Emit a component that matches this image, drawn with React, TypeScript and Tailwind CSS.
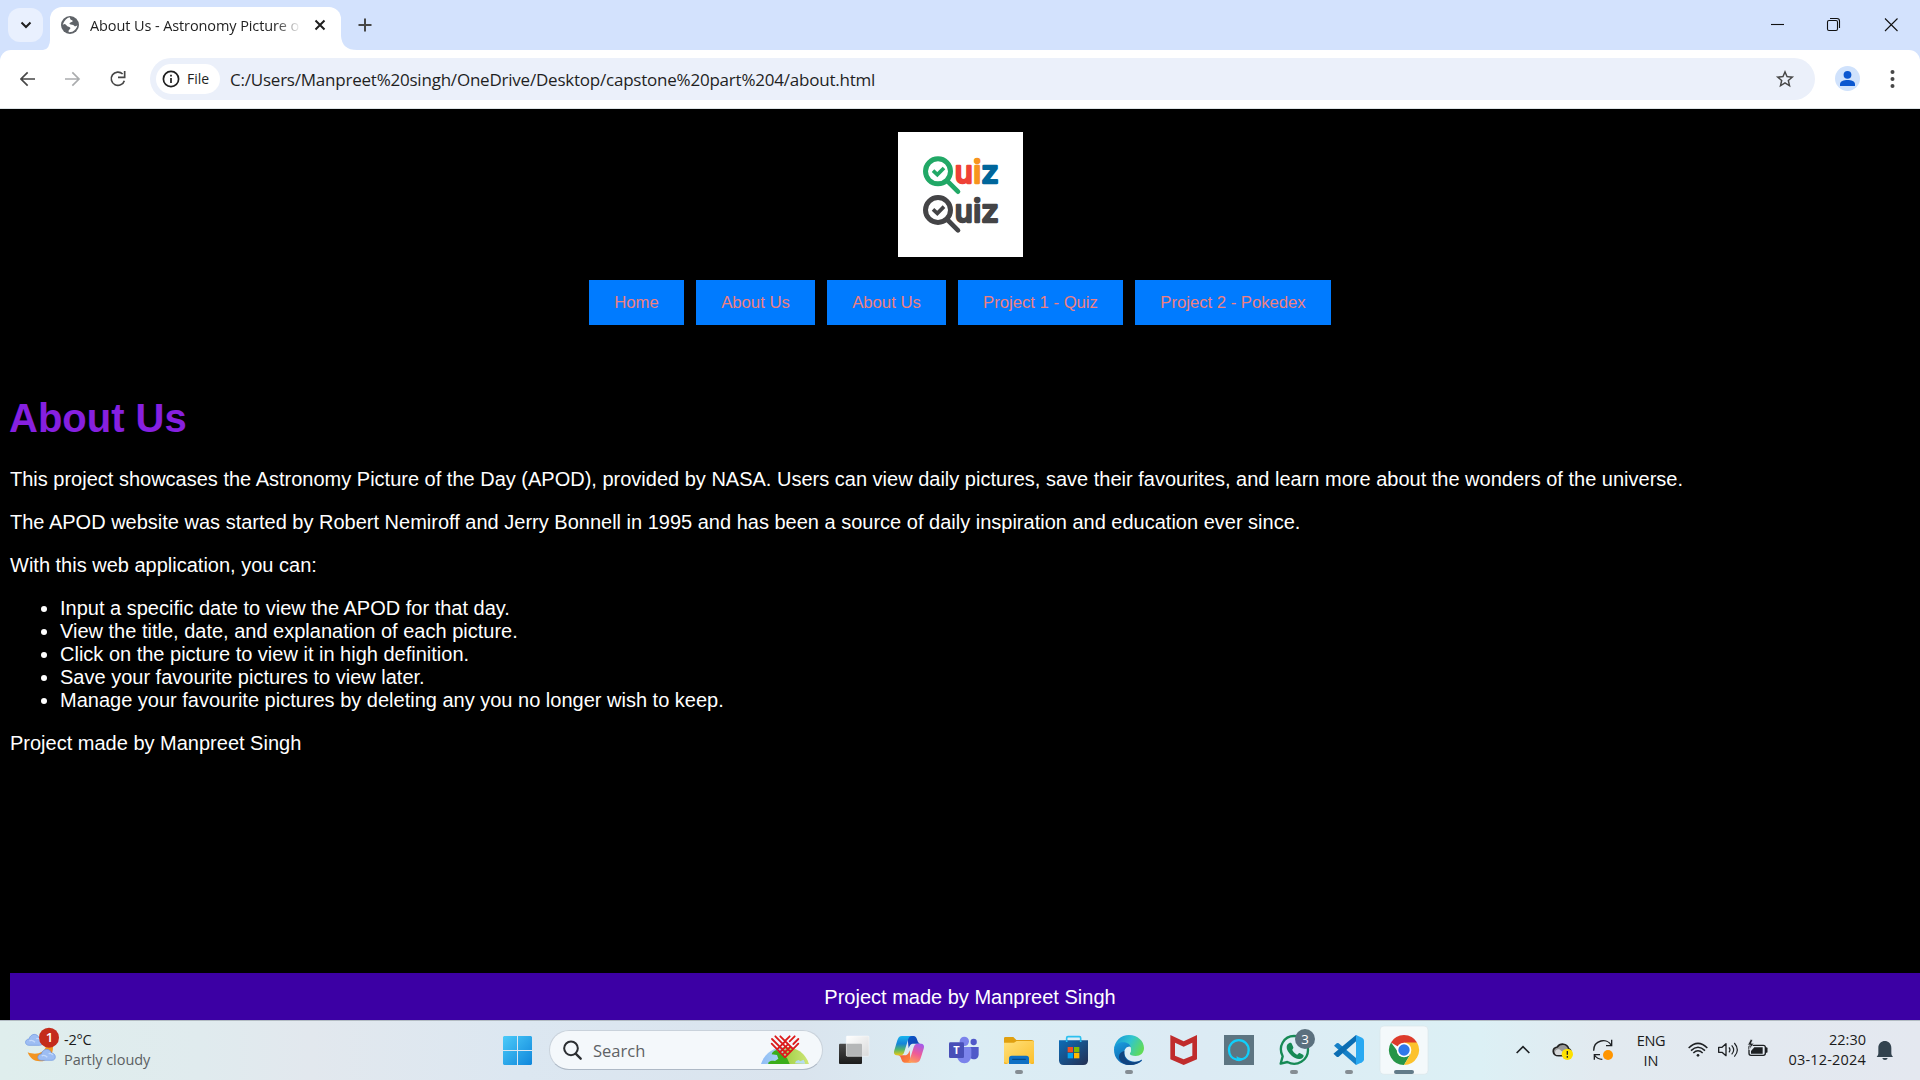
import React from "react";

const SANS = "font-['Liberation_Sans',Arial,sans-serif]";
const UI = "font-['Open_Sans','Noto_Sans',sans-serif]";

function Globe() {
  return (
    <svg className="h-[18px] w-[18px]" viewBox="183 48 54 54">
      <circle cx="210" cy="75" r="27" fill="#5f6368" />
      <path d="M188 74c5-13 13-21 21-22l2 5c1 4 6 2 7 6 0 4-6 3-9 6-2 3 2 5 7 5 6 0 7 6 11 5 3 0 4-4 5-4-1 9-7 17-15 20l-10 2c-3-2-1-7 2-9 4-3 2-7-3-8-7-1-7-7-12-8z" fill="#fff" />
    </svg>
  );
}

function QuizMark({ y, ring, u, i, z }: { y: number; ring: string; u: string; i: string; z: string }) {
  return (
    <g transform={`translate(0 ${y})`}>
      <circle cx="174" cy="154" r="37.5" fill="#fff" stroke={ring} strokeWidth="15" />
      <path d="M203 184l31 31" stroke={ring} strokeWidth="14" strokeLinecap="round" />
      <path d="M159 152l13 12 20-20" fill="none" stroke={ring} strokeWidth="11" />
      <g fontSize="94" className="font-['Inter',sans-serif] font-medium" strokeWidth="7" strokeLinejoin="round">
        <text x="224" y="190" fill={u} stroke={u} textLength="54" lengthAdjust="spacingAndGlyphs">u</text>
        <text x="279.500" y="190" fill={i} stroke={i}>i</text>
        <text x="304" y="190" fill={z} stroke={z}>z</text>
      </g>
    </g>
  );
}

function QuizLogo() {
  return (
    <svg className="h-[125px] w-[125px] bg-white" viewBox="54 36 375 375">
      <QuizMark y={0} ring="#21a866" u="#ef4136" i="#f7941e" z="#00669b" />
      <QuizMark y={116} ring="#444446" u="#444446" i="#444446" z="#444446" />
    </svg>
  );
}

function Cell({ x, w = 165, children }: { x: number; w?: number; children: React.ReactNode }) {
  return (
    <svg className="h-[59px] shrink-0" width={w / 3} viewBox={`${x} 18 ${w} 177`} fill="none">
      {children}
    </svg>
  );
}

const Dot = ({ cx }: { cx: number }) => <rect x={cx - 12} y="165" width="24" height="12" rx="6" fill="#858d93" />;

function TaskbarIcons() {
  return (
    <>
      <Cell x={18}>
        <defs>
          <linearGradient id="tv1" x1="0" y1="0" x2="0" y2="1"><stop stopColor="#4a4a4a" /><stop offset="1" stopColor="#1b1b1b" /></linearGradient>
          <linearGradient id="tv2" x1="0" y1="0" x2="1" y2="1"><stop stopColor="#fff" /><stop offset="1" stopColor="#d9dadb" /></linearGradient>
        </defs>
        <rect x="57" y="86" width="69" height="61" rx="3" fill="url(#tv1)" />
        <rect x="79" y="63" width="68" height="61" rx="3" fill="url(#tv2)" />
        <path d="M79 86h44q3 0 3 3v35H82q-3 0-3-3z" fill="#b5b7b8" />
        <rect x="79" y="63" width="68" height="61" rx="3" stroke="#fff" strokeOpacity=".6" strokeWidth="2" />
      </Cell>
      <Cell x={183}>
        <defs>
          <linearGradient id="cp1" x1="0" y1="0" x2="0" y2="1"><stop stopColor="#18b5ee" /><stop offset=".4" stopColor="#1584d8" /><stop offset=".7" stopColor="#54b56a" /><stop offset="1" stopColor="#ecc813" /></linearGradient>
          <linearGradient id="cp2" x1=".7" y1="0" x2=".3" y2="1"><stop stopColor="#a75be8" /><stop offset=".5" stopColor="#ef5b97" /><stop offset="1" stopColor="#ff9f55" /></linearGradient>
          <linearGradient id="cp3" x1="0" y1="0" x2="1" y2="1"><stop stopColor="#0a57c8" /><stop offset="1" stopColor="#173fae" /></linearGradient>
          <linearGradient id="cp4" x1="0" y1="0" x2="1" y2="1"><stop stopColor="#f04d3c" /><stop offset="1" stopColor="#ff8a3c" /></linearGradient>
        </defs>
        <path d="M262 63h18c8 0 10 7 12 13 2 7 5 10 11 10h-22c-10 0-12 6-15 14z" fill="url(#cp3)" />
        <path d="M272 143h-18c-7 0-9-7-11-13-2-7-5-9-12-9h24c9 0 11-7 14-15z" fill="url(#cp4)" />
        <path d="M246 63h29c-8 1-10 8-13 18l-9 29c-2 8-6 11-12 11h-8c-10 0-13-6-10-15l9-30c3-9 6-13 14-13z" fill="url(#cp1)" />
        <path d="M288 143h-29c8-1 10-8 13-18l9-28c2-8 6-11 12-11h8c10 0 13 6 10 15l-9 29c-3 9-6 13-14 13z" fill="url(#cp2)" />
      </Cell>
      <Cell x={348}>
        <circle cx="461" cy="81" r="9.500" fill="#5059c9" />
        <path d="M446 96h30v22c0 9-6 15-14 15s-16-6-16-15z" fill="#5059c9" />
        <circle cx="433" cy="79" r="14" fill="#7b83eb" />
        <path d="M411 96h38q5 0 5 5v20c0 14-9 24-21 24s-22-10-22-24z" fill="#7b83eb" />
        <rect x="387" y="82" width="45" height="47" rx="4" fill="#484fb8" />
        <text x="409.500" y="117" textAnchor="middle" fontSize="33" className={`${UI} font-bold`} fill="#fff">T</text>
      </Cell>
      <Cell x={513}>
        <defs><linearGradient id="fe" x1="0" y1="0" x2="1" y2="1"><stop stopColor="#ffe07a" /><stop offset="1" stopColor="#fcc02d" /></linearGradient></defs>
        <path d="M552 70q0-4 4-4h24l9 9h45q8 0 8 7v14h-90z" fill="#e0a010" />
        <path d="M552 83h30l8-5h48q4 0 4 4v62h-90z" fill="url(#fe)" />
        <path d="M567 147v-17q0-8 8-8h44q8 0 8 8v17z" fill="#0f70c4" />
        <path d="M578 133h38" stroke="#064a86" strokeWidth="4" strokeLinecap="round" />
        <path d="M552 141v3q0 3 3 3h12M627 147h12q3 0 3-3v-3" fill="#f7b723" />
        <Dot cx={597} />
      </Cell>
      <Cell x={678}>
        <defs><linearGradient id="ms" x1="0" y1="0" x2="1" y2="1"><stop stopColor="#0d6db8" /><stop offset="1" stopColor="#242f52" /></linearGradient></defs>
        <path d="M740 82V69q0-4 4-4h34q4 0 4 4v13" stroke="#2cc0ef" strokeWidth="5" />
        <path d="M717 76h87v60q0 14-14 14h-59q-14 0-14-14z" fill="url(#ms)" />
        <path d="M740 76v5M782 76v5" stroke="#2cc0ef" strokeWidth="5" />
        <rect x="743" y="96" width="16" height="16" fill="#f25022" /><rect x="762" y="96" width="16" height="16" fill="#7fba00" />
        <rect x="743" y="114" width="16" height="16" fill="#00a4ef" /><rect x="762" y="114" width="16" height="16" fill="#ffb900" />
      </Cell>
      <Cell x={843}>
        <defs>
          <linearGradient id="ed1" x1="0" y1=".2" x2="1" y2=".6"><stop stopColor="#1597d8" /><stop offset=".5" stopColor="#31c5cf" /><stop offset="1" stopColor="#62dc55" /></linearGradient>
          <linearGradient id="ed2" x1="0" y1="0" x2=".6" y2="1"><stop stopColor="#1a9fe0" /><stop offset="1" stopColor="#0c59a4" /></linearGradient>
        </defs>
        <path d="M882 104c1-26 21-44 45-44 26 0 45 18 45 39 0 15-11 24-25 24-11 0-18-4-18-7 0-2 4-4 4-12 0-11-9-20-22-20-14 0-25 8-29 20z" fill="url(#ed1)" />
        <path d="M882 103c2-14 14-21 27-21 12 0 21 5 23 14-9-3-19 4-19 16 0 18 15 28 31 28 8 0 14-2 19-5 3-2 4 0 2 3-8 8-21 12-38 12-25 0-46-19-45-47z" fill="url(#ed2)" />
        <path d="M913 108c-3 23 12 34 30 34 8 0 15-3 21-6-8 10-22 15-37 14-18-2-30-13-30-25 0-9 7-15 16-17z" fill="#10437f" />
        <path d="M918 103c-1-5 5-8 12-8 3 5 4 13 0 19-1 2-1 4 1 6-7-2-12-9-13-17z" fill="#dfeef5" />
        <Dot cx={927} />
      </Cell>
      <Cell x={78}>
        <path d="M121 60l40 19 40-19v73l-40 17-40-17zm14 23v39l26 11 26-11V83l-26 12z" fill="#c02c2c" fillRule="evenodd" />
      </Cell>
      <Cell x={243}>
        <rect x="282" y="60" width="90" height="90" fill="#5d7582" />
        <path d="M320 134c-14-3-23-15-23-29a29.500 29.500 0 1 1 59 0c0 14-9 26-23 29l-6 1z" stroke="#10cffb" strokeWidth="7" />
        <path d="M320 123c8 7 12 6 21 5-5 6-12 9-21 10z" fill="#10cffb" />
      </Cell>
      <Cell x={408}>
        <path d="M452 146l6-22c-15-29 4-61 34-61s42 22 42 42c0 31-33 51-62 36z" stroke="#168a55" strokeWidth="7" strokeLinejoin="round" />
        <path d="M478 84c4-1 6-1 8 4l4 9c1 3-3 6-3 8 3 7 8 11 14 14 3 0 5-6 8-5l10 5c3 2 2 6-1 9-10 9-24 2-33-6-9-8-16-18-15-26 0-5 3-10 8-12z" fill="#168a55" />
        <circle cx="525" cy="72" r="30" fill="#5b707e" />
        <text x="525" y="86" textAnchor="middle" fontSize="40" className={UI} fill="#fff">3</text>
        <Dot cx={492} />
      </Cell>
      <Cell x={573}>
        <path d="M612 92l8-7q3-2 6 0l59 50-7 15z" fill="#1680c7" />
        <path d="M612 118l8 7q3 2 6 0l59-52-7-13-66 55q-3 2 0 3z" fill="#0b6db3" />
        <path d="M678 60l18 8q6 3 6 9v56q0 6-6 9l-18 8z" fill="#29a9f2" />
        <Dot cx={657} />
      </Cell>
      <Cell x={738}>
        <rect x="750" y="33" width="144" height="145" rx="12" fill="#f4f9fb" stroke="#dbe5ea" strokeWidth="2" />
        <path d="M822 105L783 82.500a45 45 0 0 1 78 0z" fill="#dd3b2c" />
        <path d="M822 105h-22L783 82.500A45 45 0 0 0 822 150l20-34z" fill="#269548" />
        <path d="M822 82.500h39A45 45 0 0 1 822 150l20-34z" fill="#fcc22d" />
        <circle cx="822" cy="105" r="22" fill="#fff" />
        <circle cx="822" cy="105" r="17" fill="#2f78ea" />
        <rect x="792" y="165" width="60" height="12" rx="6" fill="#627b89" />
      </Cell>
    </>
  );
}

function Cloud({ t }: { t: string }) {
  return (
    <g transform={t}>
      <path d="M11 34C-3 34-3 16 11 15 16-3 37-3 41 12c15 0 16 22 2 22z" fill="#9dbdf3" stroke="#6c95e2" strokeWidth="2" />
      <path d="M12 21c8-5 14 1 17 4M33 14q8-3 12 4" stroke="#c5dafb" strokeWidth="4" />
    </g>
  );
}

function Taskbar() {
  return (
    <footer className={`${UI} flex h-[60px] w-full border-t border-[#b3bcc3] bg-[linear-gradient(90deg,#dfeeed_0px,#e0ebee_200px,#e2e8ee_310px,#dce7f1_520px,#dae4ee_800px,#dbedf4_960px,#dcebf4_1200px,#dcf0f5_1480px,#e2eaf0_1600px,#e4e8f0_1920px)] text-[15px]`}>
      <div className="flex w-[484px] pl-[25px]">
        <svg className="mt-[6px] h-[36px] w-[35px]" viewBox="75 201 105 108" fill="none">
          <path d="M159 260c1 26-17 44-39 44-18 0-31-10-37-27 25 10 50 2 55-18z" fill="#f29422" />
          <Cloud t="translate(76 222)" />
          <Cloud t="translate(113 267)" />
          <circle cx="147" cy="233" r="30" fill="#c42b1c" />
          <text x="149" y="247" fontSize="40" textAnchor="middle" fill="#fff" className="font-semibold">1</text>
        </svg>
        <div className="ml-[4px] mt-[9px] leading-[20px]">
          <div className="text-[14.500px] tracking-[-0.200px] text-[#1b1b1b]">-2°C</div>
          <div className="text-[14.500px] tracking-[-0.050px] text-[#5c6163]">Partly cloudy</div>
        </div>
      </div>
      <div className="flex w-[65px]">
        <svg className="ml-[19px] mt-[15px] h-[29px] w-[29px]" viewBox="0 0 29 29">
          <defs><linearGradient id="win" x1="0" y1="0" x2="1" y2="1" gradientUnits="objectBoundingBox"><stop stopColor="#4ccbf9" /><stop offset="1" stopColor="#0f86db" /></linearGradient></defs>
          <path d="M1 0h13v14H0V1zM15 0h13l1 1v13H15zM0 15h14v14H1l-1-1zM15 15h14v13l-1 1H15z" fill="url(#win)" />
        </svg>
      </div>
      <div className="mt-[9px] flex h-[40px] w-[274px] items-center rounded-full border border-[#c9d2db] border-b-[#aeb9c6] bg-[#f4f8fb]">
        <svg className="ml-[13px] h-[20px] w-[19px]" viewBox="218 76 57 60" fill="none" stroke="#2b2e31" strokeWidth="6">
          <circle cx="242" cy="101" r="20.500" /><path d="M256 117l15 15" strokeWidth="7" strokeLinecap="round" />
        </svg>
        <span className="ml-[11px] w-[71px] pt-[2px] text-[16.500px] leading-[22px] text-[#5e6265]">Search</span>
        <svg className="ml-[96px] h-[32px] w-[50px]" viewBox="813 66 150 96" fill="none">
          <defs><linearGradient id="earth" x1="0" y1="0" x2="1" y2="0"><stop stopColor="#8fbcf8" /><stop offset=".4" stopColor="#a9d3ef" /><stop offset=".55" stopColor="#a5d34d" /><stop offset="1" stopColor="#cfe678" /></linearGradient></defs>
          <path d="M816 156c10-30 36-51 72-51s62 20 72 51z" fill="url(#earth)" />
          <path d="M838 156c-2-8 10-12 20-9l10-7-4-11-16-2c2-7 6-10 14-13l32 24 8 18z" fill="#3aad1b" />
          <path d="M918 154l3-7 8-3 5 4 10-5 5 12z" fill="#b5dcf3" />
          <g stroke="#dc1a1a" strokeWidth="5.500" strokeLinecap="round">
            <path d="M848 95l40 41M849 81l47 47M859 73l45 46M874 73l38 38M928 95l-40 41M928 81l-15 15M917 73l-15 15M902 73l-14 14M905 104l-25 24M896 98l-24 23M887 90l-23 22" />
          </g>
        </svg>
      </div>
      <div className="w-[3px]" />
      <TaskbarIcons />
      <div className="w-[72px]" />
      <Cell x={9} w={120}>
        <path d="M50 114l19-19 19 19" stroke="#1d2023" strokeWidth="5" />
      </Cell>
      <Cell x={129} w={120}>
        <path d="M176 122c-20 0-22-24-4-26 8-12 29-12 34 5 9 3 9 21-8 21z" fill="#999" stroke="#222" strokeWidth="5" />
        <path d="M165 113c0-11 12-14 18-6l20 13h-29c-6 0-9-2-9-7z" fill="#d7d9da" />
        <circle cx="202" cy="118" r="17" fill="#fde100" />
        <path d="M202 108v11M202 123v5" stroke="#222" strokeWidth="4" />
      </Cell>
      <Cell x={249} w={120}>
        <path d="M281 107c0-32 40-40 53-16M335 74v18h-17M283 134v-15h17M283 120c6 9 13 13 24 13" stroke="#1d2023" strokeWidth="4" />
        <circle cx="324" cy="120" r="15" fill="#ff9500" />
      </Cell>
      <div className="mt-[10px] w-[56px] text-center leading-[20px] text-[#1b1b1b]">
        <div className="text-[14.500px] tracking-[-0.300px]">ENG</div>
        <div className="text-[14.500px]">IN</div>
      </div>
      <Cell x={537} w={276}>
        <g stroke="#1d2023" strokeWidth="4.500">
          <path d="M566 99q28-28 56 0M573 107q21-20 42 0M580 114q14-13 28 0" />
          <circle cx="594" cy="121" r="4" fill="#1d2023" stroke="none" />
          <path d="M656 97h10l12-11v36l-12-10h-10z" strokeWidth="4" strokeLinejoin="round" />
          <path d="M687 97q6 8 0 15M695 91q12 14 0 27M703 84q18 21 0 41" strokeWidth="3.500" />
          <rect x="747" y="91" width="49" height="30" rx="6" strokeWidth="4" />
          <path d="M799 100v10" strokeWidth="7" strokeLinecap="round" />
          <path d="M763 97h25v19h-35v-8z" fill="#1d2023" stroke="none" />
          <path d="M752 73l-9 17h8l-4 15 15-20h-8l4-10z" fill="#1d2023" stroke="#e3e9f0" strokeWidth="2" />
        </g>
      </Cell>
      <div className="mt-[9px] w-[95px] whitespace-nowrap text-right text-[14.500px] leading-[20px] text-[#1b1b1b]">
        <div>22:30</div>
        <div className="tracking-[0.180px]">03-12-2024</div>
      </div>
      <Cell x={1098} w={120}>
        <path d="M1130 126c3-3 5-7 5-11v-16c0-28 39-28 39 0v16c0 4 2 8 5 11z" fill="#33434f" />
        <path d="M1147 129h16q-1 6-8 6t-8-6z" fill="#33434f" />
      </Cell>
    </footer>
  );
}

function Browser() {
  return (
    <header className={`${UI} h-[109px] w-full bg-[#d3e2fd] text-[#1f1f1f]`}>
      <div className="flex h-[50px] w-full">
        <div className="ml-[8px] mt-[8px] flex h-[34px] w-[35px] items-center justify-center rounded-[12px] bg-[#e9f0fe]">
          <svg className="h-[8px] w-[12px]" viewBox="0 0 12 8" fill="none"><path d="M1.500 1.500L6 6l4.500-4.500" stroke="#1f1f1f" strokeWidth="2" /></svg>
        </div>
        <svg className="mt-[38px] h-[12px] w-[12px] -mr-[5px]" viewBox="0 0 12 12"><path d="M12 0v12H0Q7 11.500 7.200 0z" fill="#fff" /></svg>
        <div className="mt-[7px] flex h-[43px] w-[291px] items-center rounded-t-[12px] bg-white pb-[7px]">
          <div className="ml-[11px]"><Globe /></div>
          <div className="ml-[11px] w-[211px] whitespace-nowrap pt-[2px] text-[14.500px] tracking-[-0.100px] [mask-image:linear-gradient(90deg,#000_185px,transparent_211px)]">About Us - Astronomy Picture o</div>
          <svg className="ml-[13px] h-[12px] w-[12px]" viewBox="0 0 12 12"><path d="M1.500 1.500l9 9M10.500 1.500l-9 9" stroke="#1f1f1f" strokeWidth="2" /></svg>
        </div>
        <svg className="mt-[36px] h-[14px] w-[16px]" viewBox="0 0 16 14"><path d="M0 0v14h16Q1 14 0 0z" fill="#fff" /></svg>
        <svg className="ml-[1px] mt-[18px] h-[14px] w-[14px]" viewBox="0 0 14 14"><path d="M7 .5v13M.5 7h13" stroke="#474747" strokeWidth="2" /></svg>
        <div className="grow" />
        <svg className="mt-[15px] h-[20px] w-[137px]" viewBox="0 0 137 20" fill="none" stroke="#111" strokeWidth="1.100">
          <path d="M0 9.500h13" />
          <rect x="56.500" y="5.500" width="10" height="10" rx="1.500" /><path d="M59 3.500h7q2.500 0 2.500 2.500v7" />
          <path d="M114 3.500l12.500 12.500M126.500 3.500L114 16" />
        </svg>
        <div className="w-[12px]" />
      </div>
      <div className="flex h-[59px] w-full items-center rounded-t-[11px] border-b border-[#dde3e6] bg-white pb-px">
        <svg className="ml-[20px] h-[18px] w-[107px]" viewBox="60 210 321 54" fill="none" strokeWidth="5">
          <path d="M105 237H64M83 217l-20 20 20 20" stroke="#474747" />
          <path d="M195 237h41M217 217l20 20-20 20" stroke="#aaacae" />
          <path d="M368 222a20 20 0 1 0 5 20M374 213v19h-20" stroke="#474747" />
        </svg>
        <div className="ml-[23px] flex h-[42px] w-[1665px] items-center rounded-full bg-[#ebf0fa]">
          <div className="ml-[6px] flex h-[30px] w-[64px] items-center rounded-full bg-white">
            <svg className="ml-[6px] h-[18px] w-[18px]" viewBox="0 0 18 18" fill="none" stroke="#1f1f1f" strokeWidth="1.700"><circle cx="9" cy="9" r="7.600" /><path d="M9 8v5M9 4.800v1.800" /></svg>
            <span className="ml-[7px] text-[14px] font-medium">File</span>
          </div>
          <span className="ml-[10px] w-[700px] whitespace-nowrap pt-[2px] text-[17px] tracking-[-0.220px]">C:/Users/Manpreet%20singh/OneDrive/Desktop/capstone%20part%204/about.html</span>
          <div className="grow" />
          <svg className="mr-[20px] h-[20px] w-[20px]" viewBox="1 1 22 22" fill="#474747"><path d="M22 9.240l-7.190-.620L12 2 9.190 8.630 2 9.240l5.460 4.730L5.820 21 12 17.270 18.180 21l-1.630-7.030zM12 15.400l-3.760 2.270 1-4.280-3.320-2.880 4.380-.380L12 6.100l1.710 4.040 4.380.38-3.320 2.880 1 4.280z" /></svg>
        </div>
        <svg className="ml-[20px] h-[25px] w-[25px]" viewBox="0 0 25 25"><circle cx="12.500" cy="12.500" r="12.500" fill="#d0e2fc" /><circle cx="12.500" cy="8.800" r="3.900" fill="#0b57d0" /><path d="M5 20v-2c0-5.500 15-5.500 15 0v2z" fill="#0b57d0" /></svg>
        <svg className="ml-[30px] h-[20px] w-[5px]" viewBox="0 0 5 20" fill="#474747"><circle cx="2.500" cy="3" r="2" /><circle cx="2.500" cy="10" r="2" /><circle cx="2.500" cy="17" r="2" /></svg>
      </div>
    </header>
  );
}

export default function App() {
  return (
    <div className="flex h-[1080px] w-[1920px] flex-col overflow-hidden bg-black">
      <Browser />
      <main className={`${SANS} flex h-[911px] w-full flex-col overflow-hidden bg-black text-[20px] leading-[23px] text-white`}>
        <div className="flex justify-center pt-[23px]"><QuizLogo /></div>
        <nav className="mt-[23px] flex justify-center gap-[12px] text-[16.670px] text-[#f08080]">
          <a className="flex h-[45px] w-[95px] items-center justify-center bg-[#007bff]">Home</a>
          <a className="flex h-[45px] w-[119px] items-center justify-center bg-[#007bff]">About Us</a>
          <a className="flex h-[45px] w-[119px] items-center justify-center bg-[#007bff]">About Us</a>
          <a className="flex h-[45px] w-[165px] items-center justify-center bg-[#007bff]">Project 1 - Quiz</a>
          <a className="flex h-[45px] w-[196px] items-center justify-center bg-[#007bff]">Project 2 - Pokedex</a>
        </nav>
        <section className="mt-[70px] flex flex-col gap-[20px] px-[10px]">
          <h1 className="mb-[7px] -ml-px text-[40px] font-bold leading-[46px] text-[#8620e0]">About Us</h1>
          <p>This project showcases the Astronomy Picture of the Day (APOD), provided by NASA. Users can view daily pictures, save their favourites, and learn more about the wonders of the universe.</p>
          <p>The APOD website was started by Robert Nemiroff and Jerry Bonnell in 1995 and has been a source of daily inspiration and education ever since.</p>
          <p>With this web application, you can:</p>
          <ul className="list-disc pl-[50px]">
            <li>Input a specific date to view the APOD for that day.</li>
            <li>View the title, date, and explanation of each picture.</li>
            <li>Click on the picture to view it in high definition.</li>
            <li>Save your favourite pictures to view later.</li>
            <li>Manage your favourite pictures by deleting any you no longer wish to keep.</li>
          </ul>
          <p>Project made by Manpreet Singh</p>
        </section>
        <div className="ml-[10px] mt-auto h-[47px] w-[1920px] shrink-0 bg-[#3c00a4] pt-[13px] text-center">Project made by Manpreet Singh</div>
      </main>
      <Taskbar />
    </div>
  );
}
